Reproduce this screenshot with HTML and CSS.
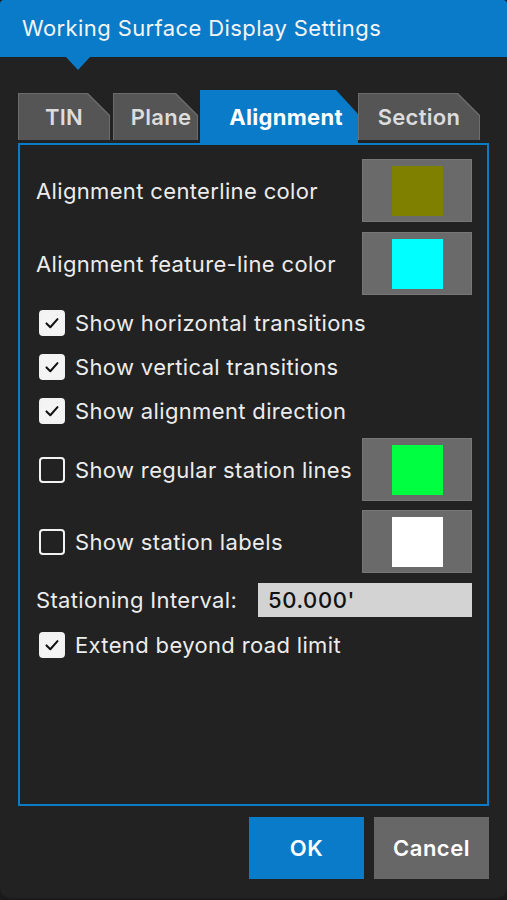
FILE: index.html
```html
<!doctype html>
<html>
	<head>
		<meta charset="utf-8">
		<link rel="stylesheet" href="styles.css">
	</head>
	<body>
		<div class="dialog">
			<div class="dialog-head">Working Surface Display Settings</div>

			<div class="tabs">
				<div class="tab tab-tin"><div class="tab-face">TIN</div></div>
				<div class="tab tab-plane"><div class="tab-face">Plane</div></div>
				<div class="tab tab-active"><div class="tab-face">Alignment</div></div>
				<div class="tab tab-section"><div class="tab-face">Section</div></div>
			</div>

			<div class="panel">
				<div class="row color-row">
					<span class="label">Alignment centerline color</span>
					<div class="swatch"><span class="chip chip-olive"></span></div>
				</div>
				<div class="row color-row row-gap">
					<span class="label">Alignment feature-line color</span>
					<div class="swatch"><span class="chip chip-cyan"></span></div>
				</div>

				<label class="row check-row first-check">
					<span class="checkbox checked"><svg viewBox="0 0 26 26"><path d="M6.5 13.5l4.5 4.5l8.5-9.5"/></svg></span>
					<span class="label">Show horizontal transitions</span>
				</label>
				<label class="row check-row">
					<span class="checkbox checked"><svg viewBox="0 0 26 26"><path d="M6.5 13.5l4.5 4.5l8.5-9.5"/></svg></span>
					<span class="label">Show vertical transitions</span>
				</label>
				<label class="row check-row">
					<span class="checkbox checked"><svg viewBox="0 0 26 26"><path d="M6.5 13.5l4.5 4.5l8.5-9.5"/></svg></span>
					<span class="label">Show alignment direction</span>
				</label>

				<div class="row color-row station-lines">
					<label class="check-inline">
						<span class="checkbox"></span>
						<span class="label">Show regular station lines</span>
					</label>
					<div class="swatch"><span class="chip chip-green"></span></div>
				</div>
				<div class="row color-row station-labels">
					<label class="check-inline">
						<span class="checkbox"></span>
						<span class="label">Show station labels</span>
					</label>
					<div class="swatch"><span class="chip chip-white"></span></div>
				</div>

				<div class="row input-row">
					<span class="label">Stationing Interval:</span>
					<div class="text-input">50.000'</div>
				</div>

				<label class="row check-row extend">
					<span class="checkbox checked"><svg viewBox="0 0 26 26"><path d="M6.5 13.5l4.5 4.5l8.5-9.5"/></svg></span>
					<span class="label">Extend beyond road limit</span>
				</label>
			</div>

			<div class="buttons">
				<div class="btn btn-ok">OK</div>
				<div class="btn btn-cancel">Cancel</div>
			</div>
		</div>
	</body>
</html>
```

FILE: styles.css
```css
body {
	margin: 0;
	background: #1a1a1a;
	font-family: Inter, "Noto Sans", sans-serif;
	color: #ececec;
}

.dialog {
	width: 507px;
	height: 898px;
	background: #222222;
	border-radius: 4px 4px 10px 10px;
	overflow: hidden;
	position: relative;
}

.dialog-head {
	height: 57px;
	background: #0a7bc8;
	color: #f4f4f4;
	font-size: 22px;
	letter-spacing: 0.4px;
	line-height: 57px;
	padding-left: 22px;
	position: relative;
}

.dialog-head:after {
	content: "";
	position: absolute;
	left: 66px;
	top: 57px;
	border-left: 12px solid transparent;
	border-right: 12px solid transparent;
	border-top: 13px solid #0a7bc8;
}

.tabs {
	display: flex;
	align-items: flex-end;
	margin: 33px 0 0 18px;
	height: 53px;
}

.tab {
	height: 47px;
	margin-bottom: 3px;
	background: #6c6c6c;
	padding: 1px 1px 0 1px;
	box-sizing: border-box;
	clip-path: polygon(0 0, calc(100% - 22px) 0, 100% 22px, 100% 100%, 0 100%);
}

.tab-face {
	height: 100%;
	background: #555555;
	color: #dcdcdc;
	font-size: 22px;
	font-weight: 600;
	letter-spacing: 0.3px;
	display: flex;
	align-items: center;
	justify-content: center;
	box-sizing: border-box;
	clip-path: polygon(0 0, calc(100% - 22px) 0, 100% 22px, 100% 100%, 0 100%);
}

.tab-tin {
	width: 92px;
	margin-right: 3px;
}

.tab-plane {
	width: 85px;
	margin-right: 2px;
}

.tab-plane .tab-face {
	padding-left: 11px;
}

.tab-active {
	width: 158px;
	height: 53px;
	margin-bottom: 0;
	background: #0a7bc8;
	padding: 0;
	position: relative;
	z-index: 1;
	clip-path: polygon(0 0, calc(100% - 22px) 0, 100% 24px, 100% 100%, 0 100%);
}

.tab-active .tab-face {
	background: #0a7bc8;
	color: #ffffff;
	font-weight: 700;
	padding-left: 14px;
	clip-path: none;
}

.tab-section {
	width: 122px;
}

.panel {
	width: 471px;
	height: 663px;
	margin-left: 18px;
	border: 2px solid #0a7bc8;
	box-sizing: border-box;
	padding: 14px 15px 0 16px;
	display: flex;
	flex-direction: column;
}

.row {
	display: flex;
	align-items: center;
}

.label {
	font-size: 22px;
	letter-spacing: 0.35px;
	color: #ececec;
	white-space: nowrap;
}

.color-row {
	height: 63px;
	justify-content: space-between;
	flex-shrink: 0;
}

.row-gap {
	margin-top: 10px;
}

.swatch {
	width: 110px;
	height: 63px;
	background: #6a6a6a;
	border: 1px solid #777777;
	box-sizing: border-box;
	display: flex;
	align-items: center;
	justify-content: center;
	flex-shrink: 0;
}

.chip {
	width: 51px;
	height: 50px;
}

.chip-olive {
	background: #808000;
}

.chip-cyan {
	background: #00ffff;
}

.chip-green {
	background: #00ff40;
}

.chip-white {
	background: #ffffff;
}

.check-row {
	height: 44px;
	flex-shrink: 0;
	padding-left: 3px;
}

.first-check {
	margin-top: 6px;
}

.check-inline {
	display: flex;
	align-items: center;
	padding-left: 3px;
}

.checkbox {
	width: 26px;
	height: 26px;
	border: 2px solid #f2f2f2;
	border-radius: 4px;
	box-sizing: border-box;
	margin-right: 10px;
	flex-shrink: 0;
}

.checkbox.checked {
	background: #f4f4f4;
}

.checkbox svg {
	display: block;
	width: 22px;
	height: 22px;
}

.checkbox path {
	fill: none;
	stroke: #111111;
	stroke-width: 2.4;
	stroke-linecap: round;
	stroke-linejoin: round;
}

.station-lines {
	margin-top: 5px;
}

.station-labels {
	margin-top: 9px;
}

.input-row {
	margin-top: 10px;
	height: 34px;
	justify-content: space-between;
	flex-shrink: 0;
}

.text-input {
	width: 214px;
	height: 34px;
	background: #d3d3d3;
	color: #111111;
	font-size: 22px;
	font-weight: 500;
	letter-spacing: 0.6px;
	line-height: 34px;
	padding-left: 10px;
	box-sizing: border-box;
}

.extend {
	margin-top: 6px;
}

.buttons {
	display: flex;
	justify-content: flex-end;
	gap: 10px;
	margin: 11px 18px 0 0;
}

.btn {
	width: 115px;
	height: 62px;
	color: #ffffff;
	font-size: 22px;
	font-weight: 600;
	letter-spacing: 0.5px;
	display: flex;
	align-items: center;
	justify-content: center;
}

.btn-ok {
	background: #0a7bc8;
}

.btn-cancel {
	background: #676767;
}
```
